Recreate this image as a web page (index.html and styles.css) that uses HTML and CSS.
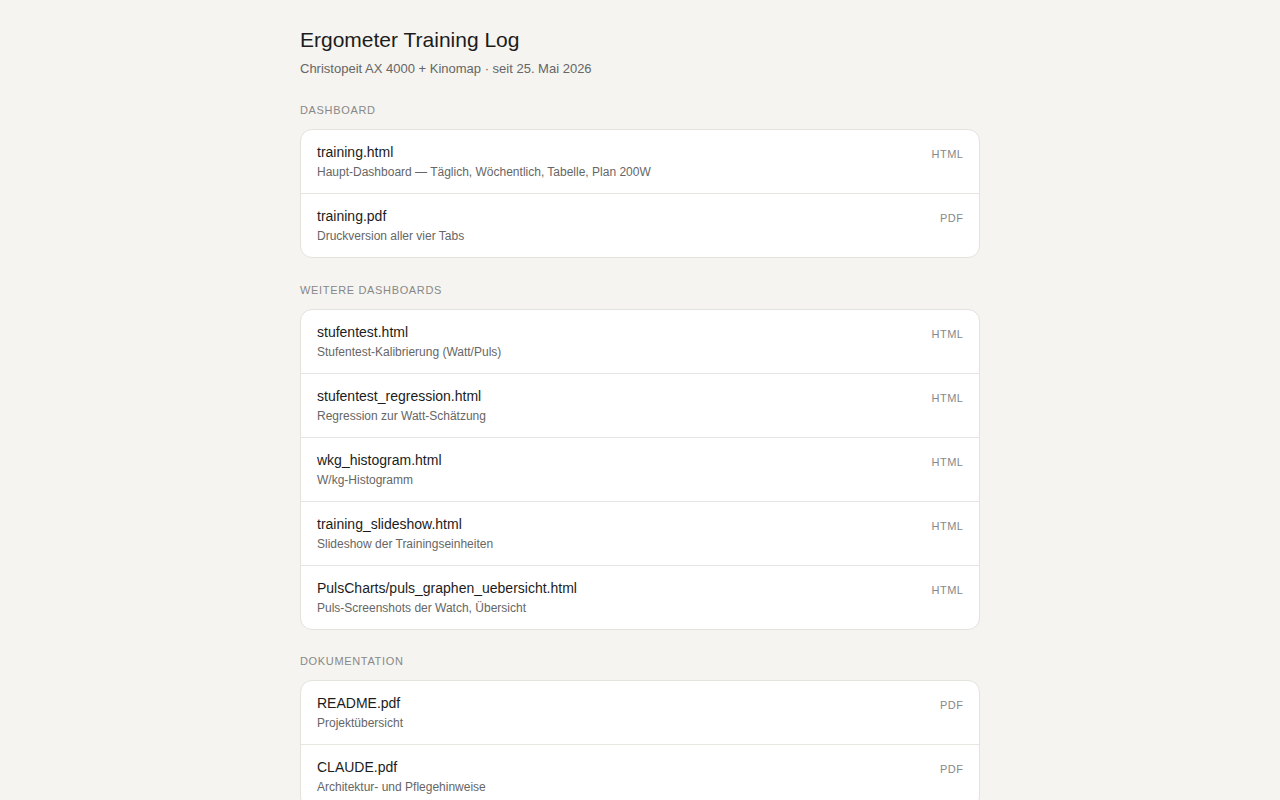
FILE: index.html
```html
<!DOCTYPE html>
<html lang="de">
<head>
    <meta charset="UTF-8">
    <meta name="viewport" content="width=device-width, initial-scale=1.0">
    <title>Ergometer Training Log</title>
    <link rel="stylesheet" href="styles.css">
</head>
<body>
    <div class="page">
        <h1 class="title">Ergometer Training Log</h1>
        <p class="subtitle">Christopeit AX 4000 + Kinomap · seit 25. Mai 2026</p>

        <h2 class="section-label">Dashboard</h2>
        <div class="card">
            <a class="row" href="training.html">
                <div class="row-text">
                    <span class="name">training.html</span>
                    <span class="desc">Haupt-Dashboard — Täglich, Wöchentlich, Tabelle, Plan 200W</span>
                </div>
                <span class="badge">HTML</span>
            </a>
            <a class="row" href="training.pdf">
                <div class="row-text">
                    <span class="name">training.pdf</span>
                    <span class="desc">Druckversion aller vier Tabs</span>
                </div>
                <span class="badge">PDF</span>
            </a>
        </div>

        <h2 class="section-label">Weitere Dashboards</h2>
        <div class="card">
            <a class="row" href="stufentest.html">
                <div class="row-text">
                    <span class="name">stufentest.html</span>
                    <span class="desc">Stufentest-Kalibrierung (Watt/Puls)</span>
                </div>
                <span class="badge">HTML</span>
            </a>
            <a class="row" href="stufentest_regression.html">
                <div class="row-text">
                    <span class="name">stufentest_regression.html</span>
                    <span class="desc">Regression zur Watt-Schätzung</span>
                </div>
                <span class="badge">HTML</span>
            </a>
            <a class="row" href="wkg_histogram.html">
                <div class="row-text">
                    <span class="name">wkg_histogram.html</span>
                    <span class="desc">W/kg-Histogramm</span>
                </div>
                <span class="badge">HTML</span>
            </a>
            <a class="row" href="training_slideshow.html">
                <div class="row-text">
                    <span class="name">training_slideshow.html</span>
                    <span class="desc">Slideshow der Trainingseinheiten</span>
                </div>
                <span class="badge">HTML</span>
            </a>
            <a class="row" href="PulsCharts/puls_graphen_uebersicht.html">
                <div class="row-text">
                    <span class="name">PulsCharts/puls_graphen_uebersicht.html</span>
                    <span class="desc">Puls-Screenshots der Watch, Übersicht</span>
                </div>
                <span class="badge">HTML</span>
            </a>
        </div>

        <h2 class="section-label">Dokumentation</h2>
        <div class="card">
            <a class="row" href="README.pdf">
                <div class="row-text">
                    <span class="name">README.pdf</span>
                    <span class="desc">Projektübersicht</span>
                </div>
                <span class="badge">PDF</span>
            </a>
            <a class="row" href="CLAUDE.pdf">
                <div class="row-text">
                    <span class="name">CLAUDE.pdf</span>
                    <span class="desc">Architektur- und Pflegehinweise</span>
                </div>
                <span class="badge">PDF</span>
            </a>
        </div>
    </div>
</body>
</html>
```

FILE: styles.css
```css
html, body {
    margin: 0;
    font-family: "Liberation Sans", Arial, sans-serif;
}

body {
    background-color: #f5f4f0;
    color: #1c1c1c;
}

.page {
    width: 680px;
    margin: 0 auto;
    padding: 27px 0 40px;
}

.title {
    margin: 0;
    font-size: 21px;
    font-weight: normal;
    line-height: 26px;
}

.subtitle {
    margin: 7px 0 0;
    font-size: 13px;
    line-height: 18px;
    color: #666;
}

.section-label {
    margin: 24px 0 11px;
    font-size: 11px;
    font-weight: normal;
    line-height: 16px;
    letter-spacing: 0.06em;
    text-transform: uppercase;
    color: #888;
}

.card + .section-label {
    margin-top: 23.5px;
}

.card {
    background: white;
    border: 1px solid #e4e2dd;
    border-radius: 12px;
    overflow: hidden;
}

.row {
    display: flex;
    justify-content: space-between;
    align-items: flex-start;
    padding: 14px 16px 13px;
    color: inherit;
    text-decoration: none;
}

.row + .row {
    border-top: 1px solid #e8e6e1;
}

.row-text {
    display: flex;
    flex-direction: column;
    gap: 4px;
}

.name {
    font-size: 14px;
    line-height: 16px;
    color: #1c1c1c;
}

.desc {
    font-size: 12px;
    line-height: 16px;
    color: #666;
}

.badge {
    margin-top: 2px;
    margin-right: -0.05em;
    font-size: 11px;
    line-height: 16px;
    letter-spacing: 0.05em;
    color: #888;
}
```
